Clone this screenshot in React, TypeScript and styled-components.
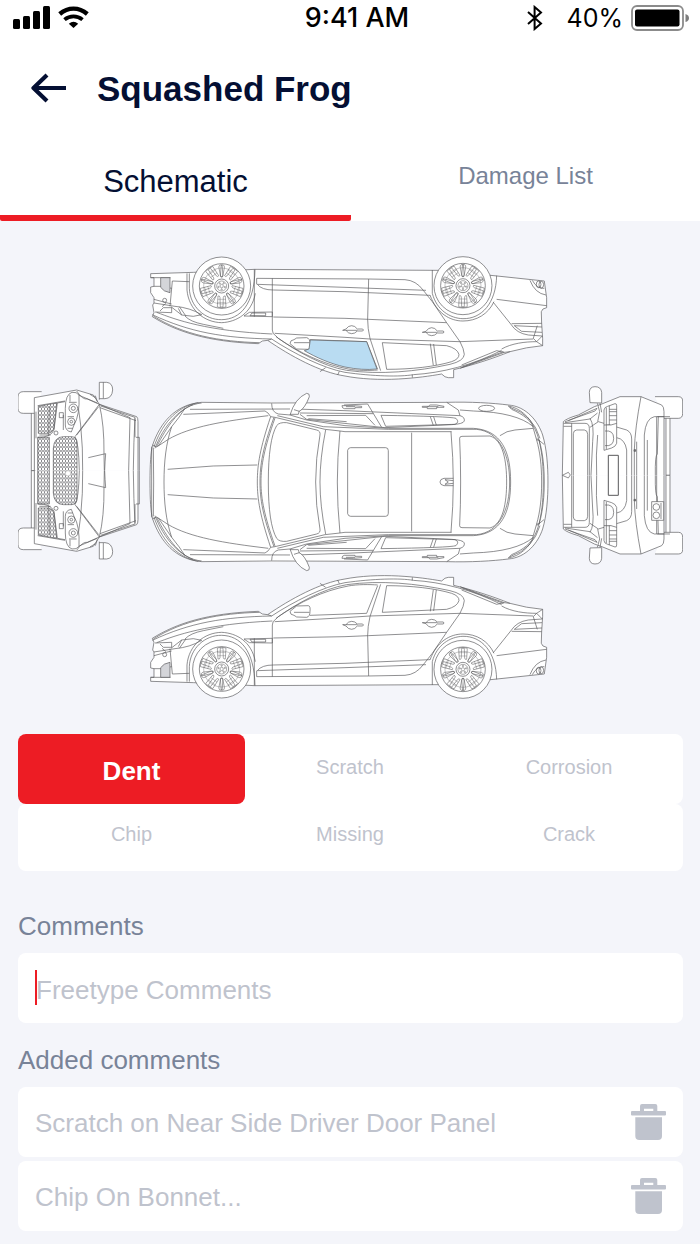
import React from "react";
import styled, { createGlobalStyle } from "styled-components";

const color = {
  navy: "#040f33",
  slate: "#788398",
  muted: "#bfc3cd",
  red: "#ed1c24",
  page: "#f4f5fa",
  line: "#58585a",
  glass: "#b9dcf2",
};

const GlobalStyle = createGlobalStyle`
  * { box-sizing: border-box; }
  body {
    margin: 0;
    background: ${color.page};
    font-family: "Liberation Sans", Arial, sans-serif;
  }
  button, input { font-family: inherit; }
`;

/* ---------- Layout ---------- */

const TopArea = styled.header`
  background: #fff;
`;

const StatusBar = styled.div`
  display: grid;
  grid-template-columns: 284fr 120fr 272fr;
  align-items: center;
  height: 36px;
  padding: 0 11px 0 13px;
  color: #000;
  font-family: Inter, "Liberation Sans", sans-serif;
  font-size: 25px;
  line-height: 36px;
`;

const StatusGroup = styled.div<{ $end?: boolean }>`
  display: flex;
  align-items: center;
  justify-content: ${(p) => (p.$end ? "flex-end" : "flex-start")};
  gap: 8px;
  svg { display: block; flex: none; }
`;

const Clock = styled.time`
  text-align: center;
  font-size: 27px;
  font-weight: 500;
  white-space: nowrap;
`;

const Percent = styled.span`
  margin-left: 16px;
`;

const TitleBar = styled.div`
  display: flex;
  align-items: center;
  gap: 30px;
  height: 106px;
  padding: 0 31px;
`;

const IconButton = styled.button`
  display: flex;
  padding: 0;
  border: 0;
  background: none;
  color: inherit;
  cursor: pointer;
  svg { display: block; }
`;

const Title = styled.h1`
  margin: 0;
  color: ${color.navy};
  font-size: 35px;
  line-height: 40px;
  font-weight: 700;
`;

const Tabs = styled.div`
  display: grid;
  grid-template-columns: 351fr 349fr;
  height: 79px;
`;

const Tab = styled.button<{ $active?: boolean }>`
  padding: ${(p) => (p.$active ? "6px 0 0" : "0 0 6px")};
  border: 0;
  border-bottom: 6px solid ${(p) => (p.$active ? color.red : "transparent")};
  border-radius: 0 0 2px 2px;
  background: none;
  color: ${(p) => (p.$active ? color.navy : color.slate)};
  font-size: ${(p) => (p.$active ? 31 : 24)}px;
  cursor: pointer;
`;

const Content = styled.main`
  padding: 35px 17px 13px 18px;
`;

const SchematicDrawing = styled.svg`
  display: block;
  width: 100%;
  height: auto;
`;

const TypePicker = styled.div`
  margin-top: 35px;
`;

const TypeRow = styled.div`
  display: grid;
  grid-template-columns: 227fr 210fr 228fr;
  border-radius: 8px;
  background: #fff;
`;

const TypeButton = styled.button<{ $active?: boolean; $tall?: boolean }>`
  height: ${(p) => (p.$tall ? 70 : 67)}px;
  padding: ${(p) => (p.$active ? "4px 0 0" : p.$tall ? "0 0 4px" : "0 0 6px")};
  border: 0;
  border-radius: 8px;
  background: ${(p) => (p.$active ? color.red : "none")};
  color: ${(p) => (p.$active ? "#fff" : color.muted)};
  font-size: ${(p) => (p.$active ? 26 : 20)}px;
  font-weight: ${(p) => (p.$active ? 700 : 400)};
  cursor: pointer;
`;

const Label = styled.label`
  display: block;
  margin: 40px 0 12px;
  color: ${color.slate};
  font-size: 26px;
  line-height: 30px;
`;

const ListHeading = styled.h2`
  margin: 22px 0 12px;
  color: ${color.slate};
  font-size: 26px;
  line-height: 30px;
  font-weight: 400;
`;

const Field = styled.div`
  position: relative;
  display: flex;
`;

const Caret = styled.span`
  position: absolute;
  left: 17px;
  top: 17px;
  width: 2px;
  height: 35px;
  background: ${color.red};
`;

const CommentInput = styled.input`
  width: 100%;
  height: 70px;
  padding: 4px 18px 0;
  border: 0;
  border-radius: 8px;
  outline: none;
  background: #fff;
  color: ${color.navy};
  font-size: 26px;
  caret-color: ${color.red};
  &::placeholder { color: ${color.muted}; opacity: 1; }
`;

const CommentList = styled.ul`
  display: grid;
  gap: 4px;
  margin: 0;
  padding: 0;
  list-style: none;
`;

const CommentItem = styled.li`
  display: flex;
  align-items: center;
  justify-content: space-between;
  height: 70px;
  padding: 0 17px;
  border-radius: 8px;
  background: #fff;
  color: ${color.muted};
  font-size: 26px;
`;

const CommentText = styled.span`
  padding-top: 3px;
`;

/* ---------- Icons ---------- */

const SignalIcon = () => (
  <svg width="37" height="24" viewBox="0 0 37 24" aria-hidden="true">
    <rect x="0" y="13" width="7" height="10" rx="1.5" />
    <rect x="10" y="10" width="7" height="13" rx="1.5" />
    <rect x="20" y="5" width="7" height="18" rx="1.5" />
    <rect x="30" y="0" width="7" height="23" rx="1.5" />
  </svg>
);

const WifiIcon = () => (
  <svg width="32" height="24" viewBox="0 0 32 24" aria-hidden="true">
    <path d="M1.7 8Q8 2.6 15.500 2.600T29.300 8" fill="none" stroke="#000" strokeWidth="4.400" />
    <path d="M6.500 13.600Q10.500 10.300 15.500 10.300T24.500 13.600" fill="none" stroke="#000" strokeWidth="3.800" />
    <path d="M15.500 22L10.800 17.700Q15.500 13.800 20.200 17.700Z" />
  </svg>
);

const BluetoothIcon = () => (
  <svg width="16" height="26" viewBox="0 0 16 26" aria-hidden="true">
    <path d="M1 7L14 18.5L7.600 24V2L14 7.500L1 19" fill="none" stroke="#000" strokeWidth="2" />
  </svg>
);

const BatteryIcon = () => (
  <svg width="58" height="26" viewBox="0 0 58 26" aria-hidden="true">
    <rect x="1" y="1" width="51" height="24" rx="5" fill="none" stroke="#8b8b8b" strokeWidth="1.8" />
    <rect x="4" y="4.500" width="44.500" height="17" rx="2" />
    <path d="M54.500 9Q58 10 58 13T54.500 17Z" fill="#7d7d7d" />
  </svg>
);

const BackIcon = () => (
  <svg width="36" height="32" viewBox="0 0 36 32" aria-hidden="true">
    <path
      d="M35 15H3M16 2L2.500 15L16 28"
      fill="none"
      stroke={color.navy}
      strokeWidth="4.200"
      strokeLinejoin="round"
    />
  </svg>
);

const TrashIcon = () => (
  <svg width="35" height="36" viewBox="0 0 35 36" fill={color.muted} aria-hidden="true">
    <path
      fillRule="evenodd"
      d="M9 7V2Q9 0 11 0H24.3Q26.3 0 26.3 2V7H34Q35 7 35 8V10.6Q35 11.6 34 11.6H1Q0 11.6 0 10.6V8Q0 7 1 7ZM13 7H22.3V4.7H13Z"
    />
    <path d="M4.3 13.3H31V32Q31 36 27 36H8.3Q4.3 36 4.3 32Z" />
  </svg>
);

/* ---------- Vehicle drawings ---------- */

const spokeAngles = [0, 72, 144, 216, 288];

const Wheel = ({ cx, cy }: { cx: number; cy: number }) => (
  <g transform={`translate(${cx} ${cy})`}>
    <circle r="87" fill="#fff" />
    <circle r="67" />
    <circle r="54" strokeWidth="1" />
    {spokeAngles.map((a) => (
      <g key={a} transform={`rotate(${a})`} strokeWidth="1.5">
        <path d="M-5 -34Q-6 -28 -11 -30L-13 -63Q0 -68 13 -63L11 -30Q6 -28 5 -34L4 -63H-4Z" />
        <path d="M-13 -50H13M-12 -40H12" strokeWidth="1" />
        <path d="M14 -24L26 -50Q32 -58 38 -50L22 -24Q16 -18 14 -24" />
        <path d="M-14 -24L-26 -50Q-32 -58 -38 -50L-22 -24Q-16 -18 -14 -24" />
      </g>
    ))}
    <circle r="21" fill="#fff" />
    <circle r="15" strokeWidth="1.5" />
    <circle r="5" strokeWidth="1.5" />
    {spokeAngles.map((a) => (
      <circle key={a} r="2" strokeWidth="1.5" transform={`rotate(${a}) translate(0 -10)`} />
    ))}
  </g>
);

const SideView = ({ glass }: { glass?: boolean }) => (
  <g>
    <path
      fill="#fff"
      d="M37 205C110 160 200 130 355 124L367 132L383 134C450 88 540 38 615 27C660 18 720 15 775 18C830 21 870 27 905 33Q915 22 925 22H941V46C1000 60 1060 80 1110 100Q1160 114 1208 118V140L1205 186L1204 220Q1206 230 1220 232V262L1213 312L1062 328L895 344L343 347L160 338L32 334V322H42V296L32 294V277L42 262V246L38 240L42 217Z"
    />
    <path d="M37 211C150 158 250 141 395 138L383 134M50 218C110 195 200 162 397 153M135 207Q150 190 190 182L250 170M40 207C130 150 240 130 358 127" />
    <path d="M395 138C460 95 550 50 615 38C700 26 780 24 820 31C905 36 1000 60 1085 104M540 40L557 52M593 30L598 41M817 22V31M415 140C480 96 550 62 625 48C650 43 690 43 713 45" />
    <path d="M408 145C470 100 550 56 620 44C720 30 830 40 930 62Q972 72 973 92Q972 108 960 130L920 187L877 250L850 284Q828 314 795 316L686 318L350 320" />
    <path d="M397 320V165Q397 153 408 147L415 140M722 43L690 140Q683 170 683 197L686 318M713 47L680 130" />
    <path d="M404 155L615 143L690 138L960 130L1180 138M510 136L680 130M727 127L740 47C815 47 885 55 935 70Q958 78 957 92Q952 110 920 118ZM880 59L871 124M889 60L881 123" />
    <path d="M400 204L615 200L685 197L920 187M352 302Q365 285 400 285L615 280L870 269M352 302L615 293L858 284M350 302V320M343 205V347" />
    <path d="M312 207L397 205V219L328 218ZM330 208H377V216H336Z" />
    <path d="M148 335V290C150 235 195 195 245 196C300 197 343 240 345 347M141 335V285C146 226 192 188 245 187C290 189 335 215 346 275" />
    <path d="M877 345V275C890 225 930 200 969 199C1025 198 1068 245 1070 328M870 270C890 215 930 192 969 192C1010 192 1045 213 1062 250" />
    <path d="M45 219L95 217V232H70L60 222M93 235L125 210L160 206L185 211Q150 232 105 236L42 246M137 208L118 235M125 210L115 230M42 257L75 248L95 243M90 236L97 312L148 310M66 235L78 245M42 296H62L95 290M32 322H92" />
    <path d="M62 293Q70 280 90 277V322H62Z" fill="#d4d5d9" />
    <circle cx="74" cy="254" r="6" />
    <path d="M450 124L470 108L505 107Q512 108 510 125Q510 140 500 142L470 141L462 136Q450 135 450 124ZM462 127H508" fill="#fff" />
    <path d="M608 164H618Q625 154 635 154T652 162H668Q673 165 668 168H652Q645 178 635 178T618 168ZM618 164H652M847 158H858Q865 148 875 148T892 156H910Q914 159 910 162H892Q885 172 875 172T858 161ZM858 158H892" />
    <path d="M1060 248L1113 182Q1130 155 1165 150L1207 147M1123 178L1145 161L1206 158M1115 184L1205 185M1123 178L1206 174M1085 108C1115 125 1155 130 1190 130L1208 118M1190 130L1180 140L1192 178M1190 130L1207 147M1070 257L1220 238M1170 314Q1185 275 1218 270M1177 314Q1192 287 1213 290" />
    <ellipse cx="1204" cy="301" rx="7" ry="10" />
    <ellipse cx="1196" cy="302" rx="7" ry="10" />
    <path d="M960 50L1093 98L1070 103L965 60M1093 98L1110 100M965 53L1090 100" />
    {glass && (
      <path
        fill={color.glass}
        d="M511 135L680 130L711 48C680 45 650 47 615 54C570 64 530 82 493 103L507 108Z"
      />
    )}
    <Wheel cx={245} cy={297} />
    <Wheel cx={969} cy={298} />
  </g>
);

const RoofHalf = () => (
  <g>
    <path d="M30 291C30 240 32 200 38 180C60 115 105 58 185 52L395 54L920 52C990 50 1060 54 1105 60C1160 64 1195 110 1208 150C1220 190 1224 240 1224 291" />
    <path d="M45 190C70 125 120 60 185 54M50 185C80 125 115 75 160 58M42 186C62 125 105 65 175 53M55 183L95 125Q120 95 135 70M38 180L50 186L85 163M35 291V185M41 291L40 188" />
    <path d="M95 125C78 175 72 230 72 291M85 163C150 125 250 108 385 92M83 253L220 243L352 240M130 88L375 78Q385 82 392 95M150 73L450 72" />
    <path d="M392 95C360 190 352 240 352 291M402 97C368 190 360 240 360 291M405 99C373 190 363 240 363 291M392 95L405 97L555 133L600 138L615 140H935" />
    <path d="M395 55Q395 82 415 87L450 90L500 105L615 122L745 130L1000 130C1085 135 1112 200 1112 291M412 92L550 125L745 133H1010C1080 140 1109 210 1109 291" />
    <path d="M385 291Q385 165 410 122Q418 111 440 113L530 135Q542 138 540 150Q527 220 527 291M540 291Q540 220 557 135M592 291Q592 220 600 138M815 143V291M933 140Q940 220 940 291" />
    <path d="M623 291V196Q625 188 632 188H737Q745 188 745 197V291M962 291Q962 220 959 160Q959 154 966 154L1050 153C1090 165 1100 230 1100 291M940 280H912Q900 282 900 291M940 287L915 284L925 291" />
    <path d="M465 72L615 77L960 92Q975 96 973 108Q970 117 935 119L735 128L500 103L480 88M920 52L955 75L960 92M683 57L725 127M500 92L677 91L705 121M505 101L620 110M723 91L737 124L945 118Q960 112 948 100Q930 94 723 91M871 95L880 121M881 95L889 120M612 60L683 57M480 84L700 86" />
    <path d="M606 62H640L665 64V68H645V71H613Q606 70 606 62ZM847 64H865L870 60H890L912 64V67H890V71H862V67H847ZM618 65H645M862 65H895" />
    <path d="M450 90Q465 40 500 25Q510 25 508 35Q495 70 478 79L462 74M478 77L475 88H450" fill="#fff" />
    <path d="M1080 152Q1100 137 1125 135L1180 130M960 75L1000 78Q1130 82 1180 125M1105 63L1115 73C1150 88 1178 110 1180 130L1190 165C1200 200 1205 240 1205 291M1190 160L1212 178M1105 63C1175 75 1213 160 1213 291M1110 67Q1180 90 1200 160M1190 165L1197 165C1208 210 1210 250 1210 291" />
  </g>
);

const RoofView = () => (
  <g>
    <path
      fill="#fff"
      stroke="none"
      d="M30 291C30 240 32 200 38 180C60 115 105 58 185 52L920 52C990 50 1060 54 1105 60C1160 64 1195 110 1208 150C1230 230 1230 352 1208 432C1195 472 1160 518 1105 522C1060 528 990 532 920 530H185C105 524 60 467 38 402C32 382 30 342 30 291Z"
    />
    <RoofHalf />
    <g transform="translate(0 582) scale(1 -1)">
      <RoofHalf />
    </g>
    <ellipse cx="1040" cy="70" rx="24" ry="9" />
  </g>
);

const FrontHalf = () => (
  <g>
    <path fill="#fff" d="M75 115H40Q24 115 24 100V66Q24 50 40 50H95M64 115V287H75V115" />
    <path
      fill="#fff"
      d="M73 287V68L200 45L250 60L268 88L380 125Q384 128 384 140V287"
    />
    <path fill="url(#mesh)" d="M85 94L140 84L132 160Q128 172 115 175H85Z" />
    <path fill="url(#mesh)" d="M83 287V187H118V287" />
    <path fill="url(#mesh)" d="M130 287V220Q132 186 160 185H185Q201 186 201 205V287" />
    <path d="M78 110V190M83 187Q122 188 132 165L142 84L165 80M83 92L165 78M118 95L116 182M88 180H122M195 185L268 88M200 180L266 95M200 48Q218 75 232 72L268 88M205 60L262 84M200 60L212 150Q219 220 218 287M268 88Q283 150 282 236L283 287M235 248L287 236Q285 260 284 287M195 185Q206 200 208 287M160 120V165" />
    <path d="M268 88L360 128L356 287M270 98L378 137M272 93L375 127Q371 200 370 287M378 187H388V287M375 130V187" />
    <path fill="#fff" d="M268 74V22H290Q308 24 308 45Q306 70 285 71H268M280 22V70M240 58L256 68M256 62L262 80" />
    <path fill="#fff" d="M186 52Q166 58 166 100V150Q166 168 184 171L192 150Q210 120 207 60Q200 50 186 52ZM177 82H200M173 125H192M180 60V80M173 160H188" />
    <circle cx="190" cy="100" r="13" />
    <circle cx="190" cy="100" r="6" />
    <circle cx="184" cy="140" r="11" />
    <circle cx="184" cy="140" r="4" />
    <circle cx="138" cy="174" r="6" fill="#fff" />
    <path d="M148 113H160V128H148Z" />
  </g>
);

const FrontView = () => (
  <g>
    <FrontHalf />
    <g transform="translate(0 574) scale(1 -1)">
      <FrontHalf />
    </g>
    <circle cx="174" cy="295" r="8" fill="#fff" stroke="#bbb" />
  </g>
);

const RearHalf = () => (
  <g>
    <path fill="#fff" d="M300 65H370Q383 65 383 78V115Q383 130 370 130H327M345 130V301H333V130" />
    <path fill="#fff" d="M22 301L25 140Q35 130 70 120L118 95L138 88L195 65L258 65L320 90Q327 95 327 110V301" />
    <path d="M30 140L120 108L128 98M40 137L126 100M30 143L105 132L130 112M26 145H90Q103 145 103 160V301M26 154H50M50 145V301M55 301V176Q55 166 65 165H88Q98 166 98 178V301" />
    <path fill="#fff" d="M105 83L103 52Q104 35 120 35Q138 35 140 52V84ZM127 85L134 110L128 140M135 85L140 112" />
    <path d="M105 157L130 140L215 165Q230 172 230 192V301M128 180Q122 240 125 301M105 130Q118 150 113 200L108 301M258 65Q240 160 238 225V301M215 301V225Q210 192 185 188" />
    <path fill="#fff" d="M147 105Q148 96 158 94L180 86Q185 85 185 92V205Q182 215 170 219L147 226ZM163 92V150M147 150H168L185 145M163 103H185M163 110H185M163 122H185M163 135H185M154 98V222M150 168Q176 165 176 190T150 212" />
    <path d="M327 125H298Q272 130 268 180V301M310 125L307 237Q300 240 301 301M307 125H345M277 195V301M305 125V301M245 200V301" />
    <path d="M237 224H242V229H237Z" fill="#777" />
  </g>
);

const RearView = () => (
  <g>
    <RearHalf />
    <g transform="translate(0 602) scale(1 -1)">
      <RearHalf />
    </g>
    <rect x="160" y="241" width="30" height="120" fill="#fff" strokeWidth="3" />
    <path d="M22 301L40 292L46 300L40 309Z" />
    <rect x="290" y="380" width="36" height="56" fill="#fff" />
    <circle cx="304" cy="396" r="10" />
    <circle cx="304" cy="421" r="10" />
    <path d="M318 384V432" />
  </g>
);

const VehicleSchematic = () => (
  <SchematicDrawing viewBox="18 256 665 443" role="img" aria-label="Vehicle schematic">
    <defs>
      <pattern id="mesh" width="9" height="12" patternUnits="userSpaceOnUse">
        <path
          d="M0 0L4.5 3L9 0M4.5 3V9M0 12L4.5 9L9 12"
          fill="none"
          stroke="#4c4c50"
          strokeWidth="1.7"
        />
      </pattern>
    </defs>
    <g fill="none" stroke={color.line} strokeWidth="2" strokeLinejoin="round">
      <g transform="translate(140 385) scale(.3333 -.3333)">
        <SideView glass />
      </g>
      <g transform="translate(10 375) scale(.3333)">
        <FrontView />
      </g>
      <g transform="translate(140 385) scale(.3333)">
        <RoofView />
      </g>
      <g transform="translate(555 375) scale(.3333)">
        <RearView />
      </g>
      <g transform="translate(140 570) scale(.3333)">
        <SideView />
      </g>
    </g>
  </SchematicDrawing>
);

/* ---------- Screen ---------- */

const typeRows = [
  ["Dent", "Scratch", "Corrosion"],
  ["Chip", "Missing", "Crack"],
];

const comments = ["Scratch on Near Side Driver Door Panel", "Chip On Bonnet..."];

export default function App() {
  const [tab, setTab] = React.useState("Schematic");
  const [type, setType] = React.useState("Dent");
  const [comment, setComment] = React.useState("");

  return (
    <>
      <GlobalStyle />
      <TopArea>
        <StatusBar>
          <StatusGroup>
            <SignalIcon />
            <WifiIcon />
          </StatusGroup>
          <Clock>9:41 AM</Clock>
          <StatusGroup $end>
            <BluetoothIcon />
            <Percent>40%</Percent>
            <BatteryIcon />
          </StatusGroup>
        </StatusBar>
        <TitleBar>
          <IconButton type="button" aria-label="Back">
            <BackIcon />
          </IconButton>
          <Title>Squashed Frog</Title>
        </TitleBar>
        <Tabs role="tablist">
          {["Schematic", "Damage List"].map((name) => (
            <Tab
              key={name}
              type="button"
              role="tab"
              aria-selected={tab === name}
              $active={tab === name}
              onClick={() => setTab(name)}
            >
              {name}
            </Tab>
          ))}
        </Tabs>
      </TopArea>
      <Content>
        <VehicleSchematic />
        <TypePicker>
          {typeRows.map((row, i) => (
            <TypeRow key={i}>
              {row.map((name) => (
                <TypeButton
                  key={name}
                  type="button"
                  aria-pressed={type === name}
                  $active={type === name}
                  $tall={i === 0}
                  onClick={() => setType(name)}
                >
                  {name}
                </TypeButton>
              ))}
            </TypeRow>
          ))}
        </TypePicker>
        <Label htmlFor="comment">Comments</Label>
        <Field>
          <CommentInput
            id="comment"
            placeholder="Freetype Comments"
            value={comment}
            onChange={(e) => setComment(e.target.value)}
          />
          {comment === "" && <Caret />}
        </Field>
        <ListHeading>Added comments</ListHeading>
        <CommentList>
          {comments.map((text) => (
            <CommentItem key={text}>
              <CommentText>{text}</CommentText>
              <IconButton type="button" aria-label={`Delete comment: ${text}`}>
                <TrashIcon />
              </IconButton>
            </CommentItem>
          ))}
        </CommentList>
      </Content>
    </>
  );
}
